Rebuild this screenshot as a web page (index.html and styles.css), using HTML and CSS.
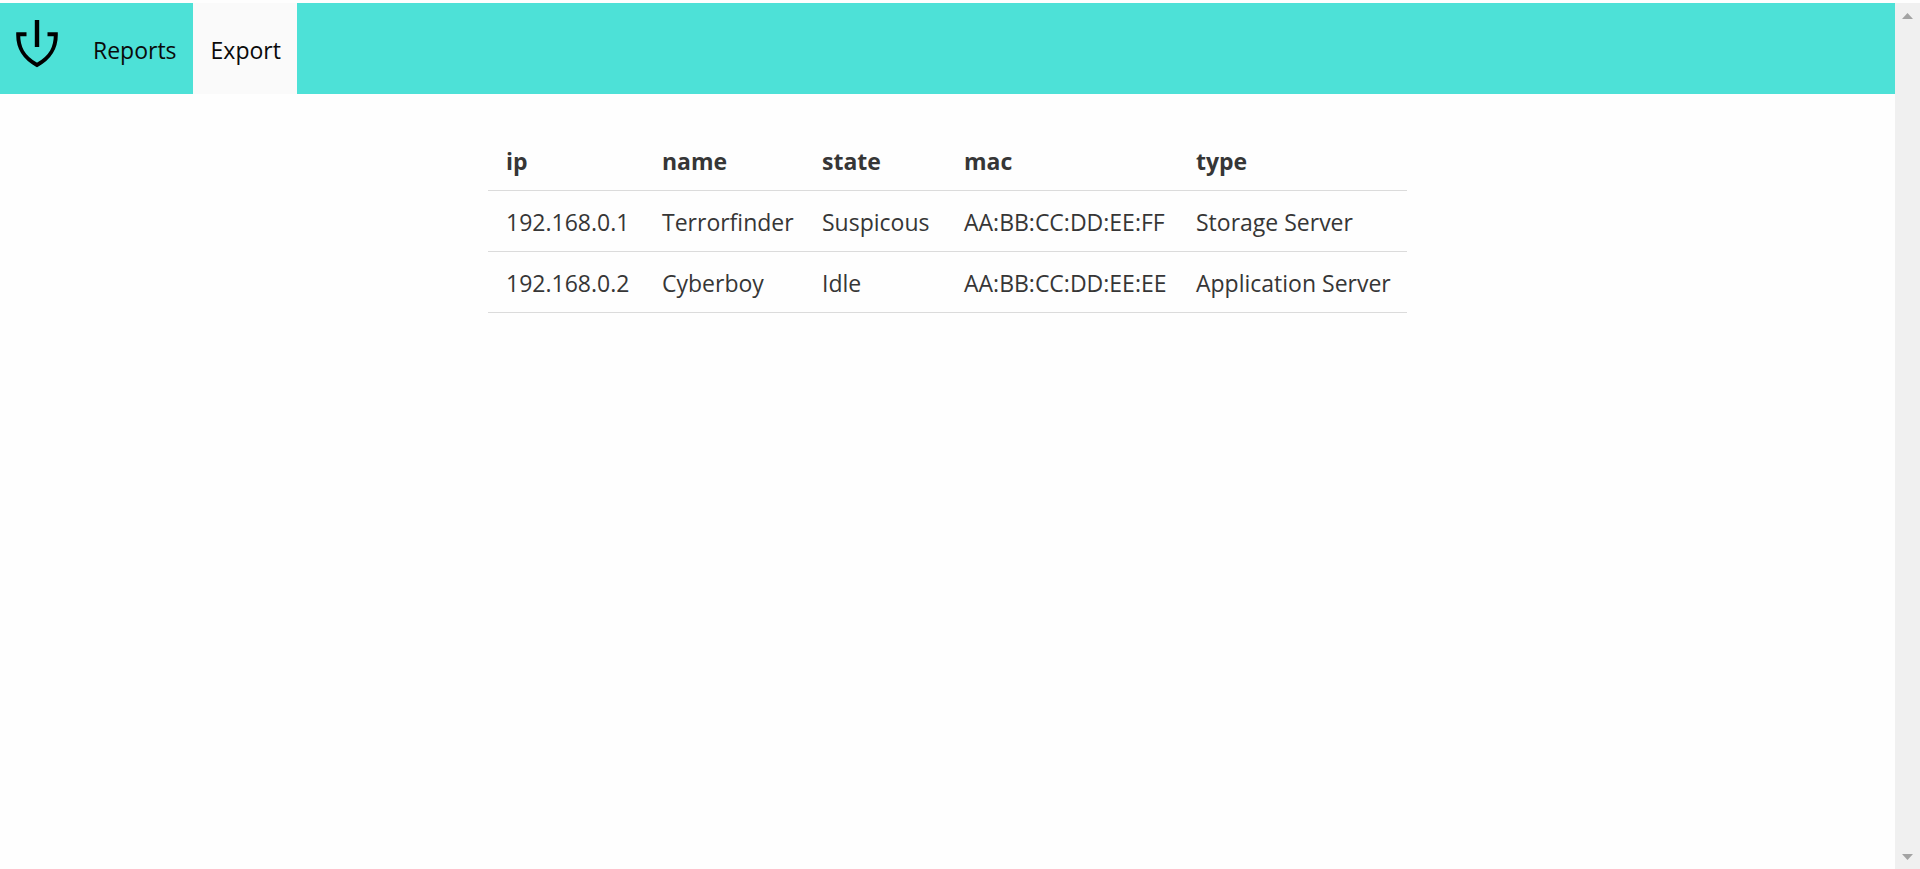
FILE: index.html
```html
<!DOCTYPE html>
<html lang="en">
<head>
<meta charset="utf-8">
<title>Export</title>
<link rel="stylesheet" href="styles.css">
</head>
<body>
<div class="viewport">
  <div class="page">
    <nav class="navbar">
      <a class="navbar-brand" href="#" aria-label="Home">
        <svg class="logo" viewBox="0 0 42 48" aria-hidden="true">
          <path d="M21 0V27" fill="none" stroke="#000" stroke-width="4.4"/>
          <path d="M10.500 14.200H2.200C2 27 6.500 37 21 45C35.500 37 40 27 39.800 14.200H31.500" fill="none" stroke="#000" stroke-width="4"/>
        </svg>
      </a>
      <a class="navbar-item" href="#">Reports</a>
      <a class="navbar-item is-active" href="#" aria-current="page">Export</a>
    </nav>
    <main class="content">
      <table class="table">
        <colgroup>
          <col class="col-ip"><col class="col-name"><col class="col-state"><col class="col-mac"><col class="col-type">
        </colgroup>
        <thead>
          <tr><th>ip</th><th>name</th><th>state</th><th>mac</th><th>type</th></tr>
        </thead>
        <tbody>
          <tr><td>192.168.0.1</td><td>Terrorfinder</td><td>Suspicous</td><td>AA:BB:CC:DD:EE:FF</td><td>Storage Server</td></tr>
          <tr><td>192.168.0.2</td><td>Cyberboy</td><td>Idle</td><td>AA:BB:CC:DD:EE:EE</td><td>Application Server</td></tr>
        </tbody>
      </table>
    </main>
  </div>
  <div class="scrollbar" aria-hidden="true">
    <svg class="arrow" viewBox="0 0 11 6"><path d="M0 6L5.500 0L11 6Z" fill="#a3a3a3"/></svg>
    <svg class="arrow" viewBox="0 0 11 6"><path d="M0 0L5.500 6L11 0Z" fill="#a3a3a3"/></svg>
  </div>
</div>
</body>
</html>
```
FILE: styles.css
```css
* {
  box-sizing: border-box;
}

body {
  margin: 0;
  background: #fefefe;
  color: #363636;
  font-family: "Segoe UI", "Open Sans", "Noto Sans", sans-serif;
  font-size: 23px;
  line-height: 36px;
}

.viewport {
  display: flex;
  min-height: 100vh;
  border-top: 3px solid #fefefe;
}

.page {
  flex: 1;
}

.navbar {
  display: flex;
  min-height: 91px;
  background: #4de1d7;
}

.navbar-brand {
  width: 75px;
  padding: 17px 0 0 16px;
}

.logo {
  display: block;
  width: 42px;
  height: 48px;
}

.navbar-item {
  display: flex;
  align-items: center;
  padding: 2px 16px 0 18px;
  color: #0a0a0a;
  text-decoration: none;
}

.navbar-item.is-active {
  background: #fafafa;
}

.content {
  display: flex;
  justify-content: center;
  padding: 36px;
}

.table {
  width: 919px;
  table-layout: fixed;
  border-collapse: separate;
  border-spacing: 0;
}

.col-ip {
  width: 156px;
}

.col-name {
  width: 160px;
}

.col-state {
  width: 142px;
}

.col-mac {
  width: 232px;
}

.table th,
.table td {
  padding: 13px 0 11px 18px;
  border-bottom: 1px solid #dbdbdb;
  text-align: left;
  white-space: nowrap;
}

.scrollbar {
  display: flex;
  flex-direction: column;
  align-items: center;
  justify-content: space-between;
  width: 25px;
  padding: 10px 0 9px;
  background: #f0f0f0;
}

.arrow {
  width: 11px;
  height: 6px;
}
```
